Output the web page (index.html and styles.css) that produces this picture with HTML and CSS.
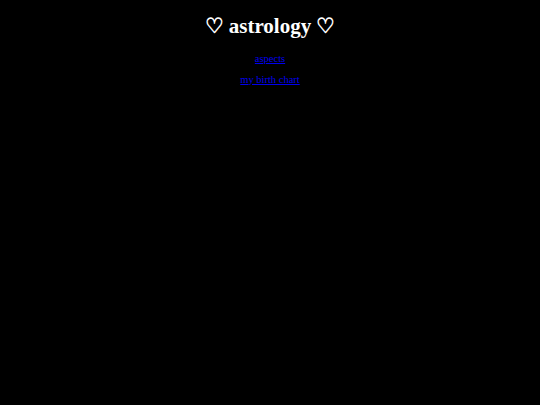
FILE: index.html
```html
<!DOCTYPE html>
<html lang="en">
<head>
    <meta charset="UTF-8">
    <meta name="viewport" content="width=device-width, initial-scale=1.0">
    <title>astrology</title>
    <link rel="stylesheet" href="styles.css">
</head>
<body>
    <h1 class="title">♡ astrology ♡</h1>
    <p class="nav-link"><a href="#">aspects</a></p>
    <p class="nav-link"><a href="#">my birth chart</a></p>
</body>
</html>
```
FILE: styles.css
```css
body{
    background: black;
    color: white;
    font-family: "Liberation Serif", serif;
    text-align: center;
    margin: 8px;
}
.title{
    font-size: 21px;
    margin: 0 0 14px 0;
    padding-top: 6px;
}
.nav-link{
    font-size: 10.5px;
    margin: 10px 0;
}
.nav-link a{
    color: #0000ee;
}
```
